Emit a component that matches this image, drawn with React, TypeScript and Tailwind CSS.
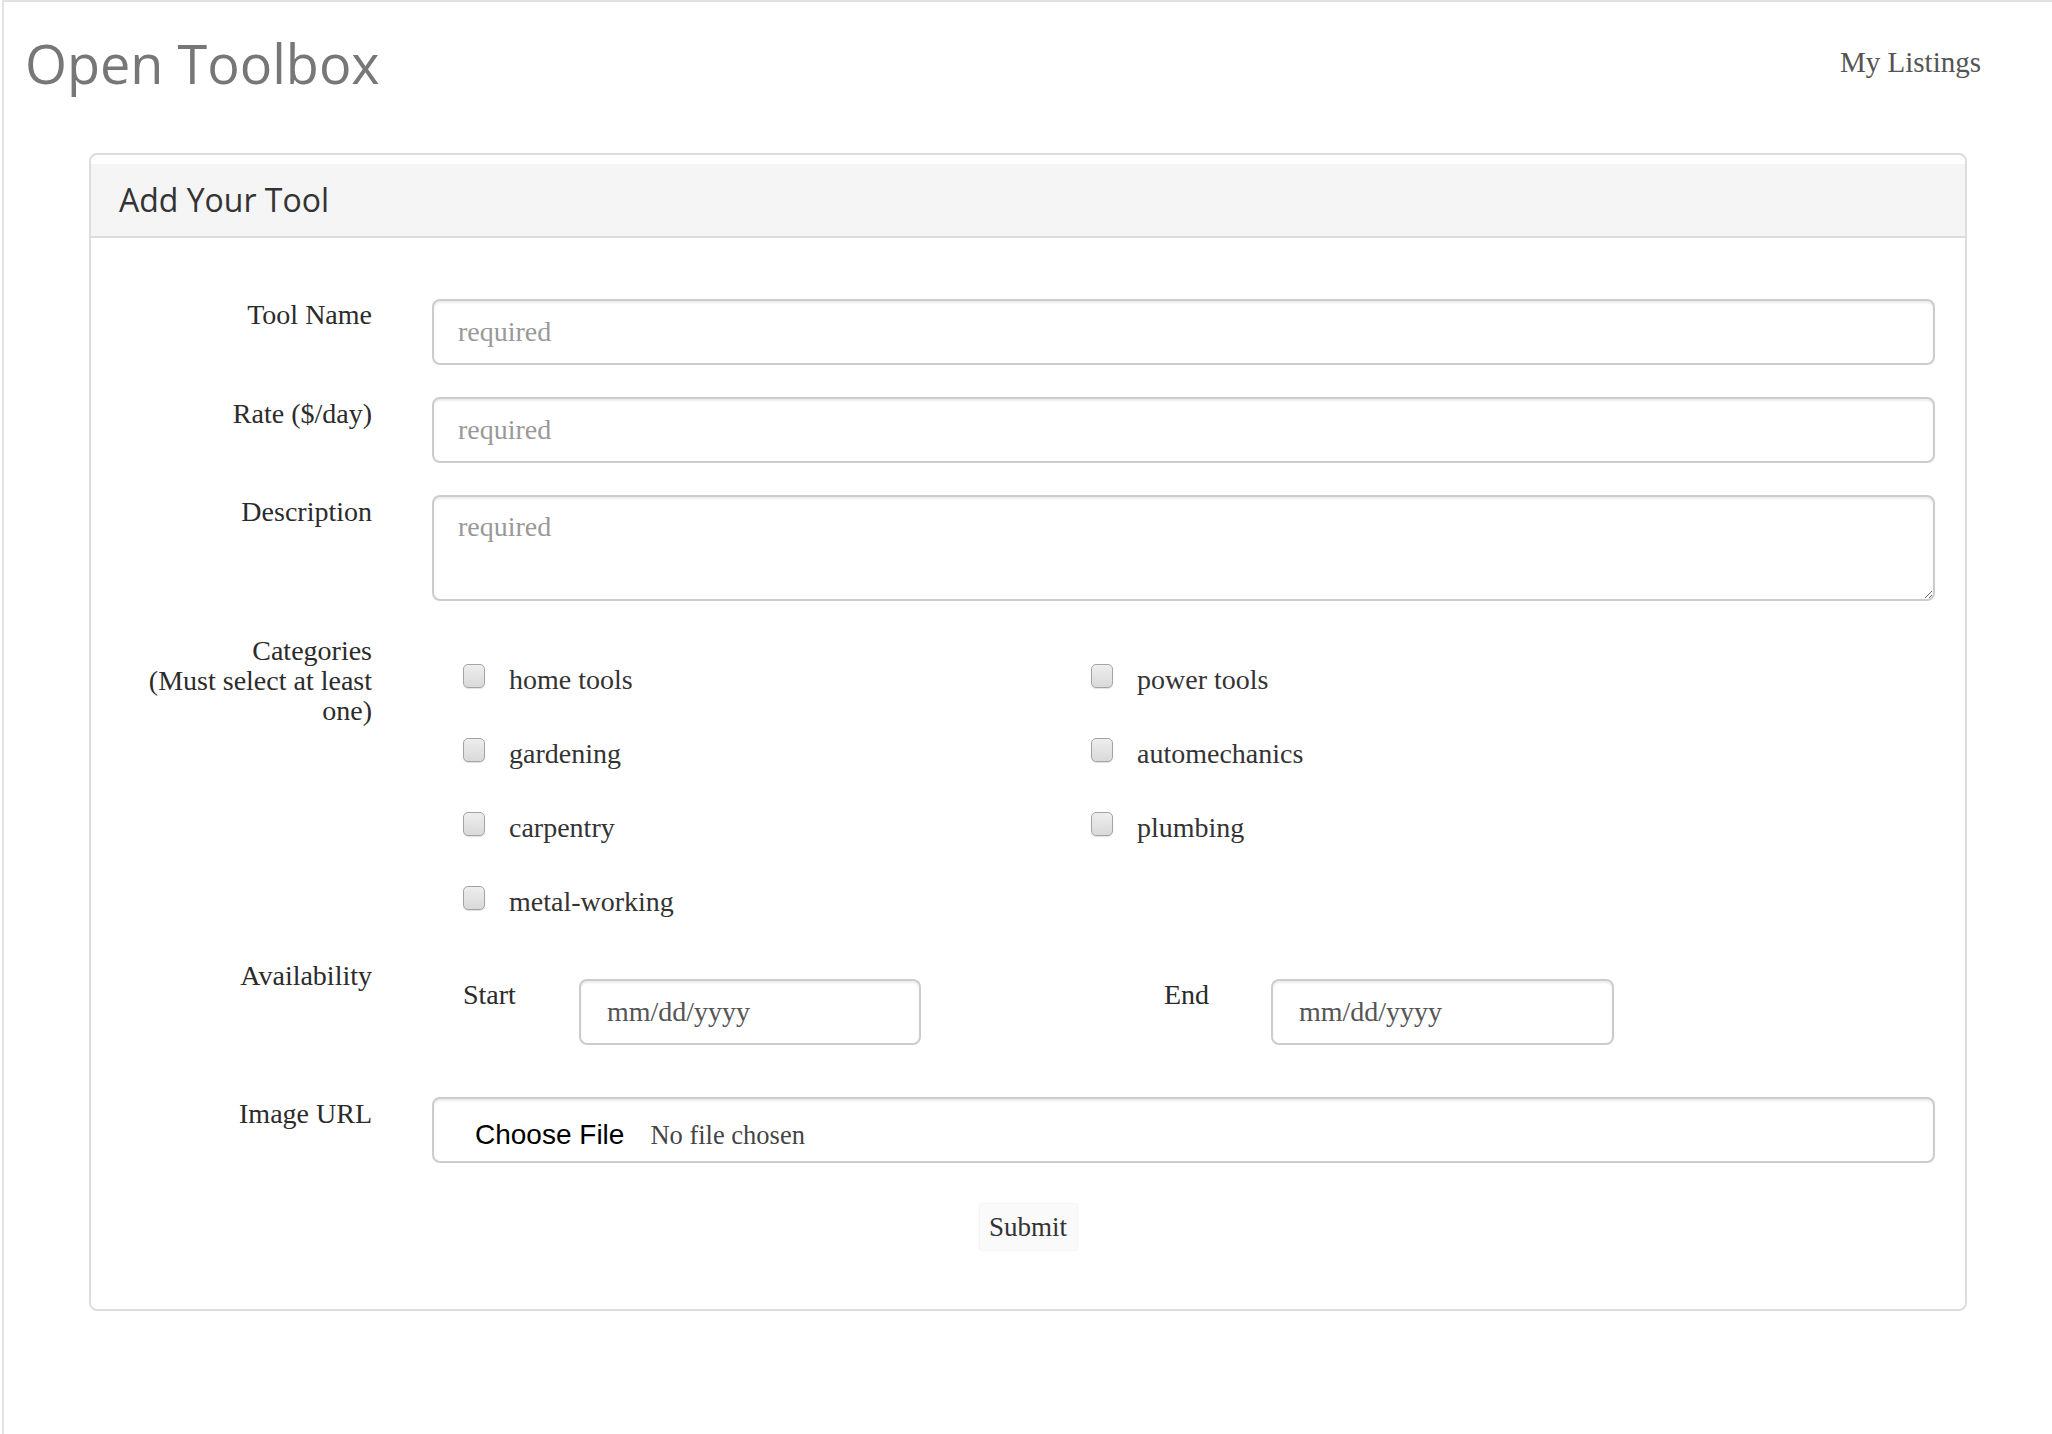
const categories = [
  ["home tools", "power tools"],
  ["gardening", "automechanics"],
  ["carpentry", "plumbing"],
  ["metal-working", ""],
];

function Checkbox({ label }: { label: string }) {
  return (
    <label className="flex items-start">
      <span className="w-[22px] h-[24px] rounded-[5px] border border-[#a3a3a3] bg-gradient-to-b from-[#eeeeee] to-[#d9d9d9] shadow-[0_1px_1px_rgba(0,0,0,0.12)]"></span>
      <span className="ml-[24px] text-[28px] leading-[32px] text-[#333]">{label}</span>
    </label>
  );
}

function FieldLabel({ children, className = "leading-[32px]" }: { children: React.ReactNode; className?: string }) {
  return (
    <div className={"w-[311px] pl-[30px] pr-[30px] text-right text-[28px] text-[#2b2b2b] " + className}>
      {children}
    </div>
  );
}

export default function App() {
  return (
    <div className="min-h-screen ml-[2px] border-t-2 border-l-2 border-[#e2e2e2] bg-white font-['Liberation_Serif',serif]">
      {/* Navbar */}
      <header className="flex justify-between items-start pt-[31px]">
        <h1 className="ml-[21px] font-['Open_Sans',sans-serif] text-[54px] leading-[60px] text-[#777]">
          Open Toolbox
        </h1>
        <a className="mt-[13px] mr-[71px] text-[29px] leading-[32px] text-[#555]">My Listings</a>
      </header>

      {/* Panel */}
      <section className="mt-[60px] ml-[85px] w-[1878px] border-2 border-[#dddddd] rounded-[8px] pt-[9px]">
        <div className="bg-[#f5f5f5] border-b-2 border-[#dddddd] px-[28px] py-[14px]">
          <h2 className="font-['Open_Sans',sans-serif] text-[32px] leading-[44px] text-[#333]">Add Your Tool</h2>
        </div>

        <form className="pt-[61px] pb-[59px]">
          <div className="flex items-start">
            <FieldLabel>Tool Name</FieldLabel>
            <input
              placeholder="required"
              className="ml-[30px] w-[1503px] h-[66px] border-2 border-[#cccccc] rounded-[8px] px-[24px] text-[28px] text-[#555] placeholder:text-[#999] shadow-[inset_0_2px_2px_rgba(0,0,0,0.075)] outline-none"
            />
          </div>

          <div className="flex items-start mt-[32px]">
            <FieldLabel className="leading-[32px] mt-[1px]">Rate ($/day)</FieldLabel>
            <input
              placeholder="required"
              className="ml-[30px] w-[1503px] h-[66px] border-2 border-[#cccccc] rounded-[8px] px-[24px] text-[28px] text-[#555] placeholder:text-[#999] shadow-[inset_0_2px_2px_rgba(0,0,0,0.075)] outline-none"
            />
          </div>

          <div className="flex items-start mt-[32px]">
            <FieldLabel className="leading-[32px] mt-[1px]">Description</FieldLabel>
            <textarea
              placeholder="required"
              className="ml-[30px] w-[1503px] h-[106px] border-2 border-[#cccccc] rounded-[8px] px-[24px] pt-[14px] text-[28px] leading-[31px] text-[#555] placeholder:text-[#999] shadow-[inset_0_2px_2px_rgba(0,0,0,0.075)] outline-none"
            />
          </div>

          <div className="flex items-start mt-[35px]">
            <FieldLabel className="leading-[30px]">
              Categories
              <br />
              (Must select at least one)
            </FieldLabel>
            <div className="ml-[61px] pt-[28px]">
              {categories.map(([a, b], i) => (
                <div key={i} className="grid grid-cols-[628px_400px] h-[74px]">
                  <Checkbox label={a} />
                  {b ? <Checkbox label={b} /> : <span></span>}
                </div>
              ))}
            </div>
          </div>

          <div className="flex items-start">
            <FieldLabel>Availability</FieldLabel>
            <div className="ml-[61px] pt-[19px] flex items-start text-[28px] leading-[32px] text-[#2b2b2b]">
              <span className="w-[116px]">Start</span>
              <input
                placeholder="mm/dd/yyyy"
                className="w-[342px] h-[66px] border-2 border-[#cccccc] rounded-[8px] px-[26px] text-[28px] text-[#555] placeholder:text-[#555] shadow-[inset_0_2px_2px_rgba(0,0,0,0.075)] outline-none"
              />
              <span className="ml-[243px] w-[107px]">End</span>
              <input
                placeholder="mm/dd/yyyy"
                className="w-[343px] h-[66px] border-2 border-[#cccccc] rounded-[8px] px-[26px] text-[28px] text-[#555] placeholder:text-[#555] shadow-[inset_0_2px_2px_rgba(0,0,0,0.075)] outline-none"
              />
            </div>
          </div>

          <div className="flex items-start mt-[52px]">
            <FieldLabel className="leading-[32px] mt-[1px]">Image URL</FieldLabel>
            <div className="ml-[30px] w-[1503px] h-[66px] border-2 border-[#cccccc] rounded-[8px] pl-[41px] pt-[20px] flex items-start shadow-[inset_0_2px_2px_rgba(0,0,0,0.075)]">
              <span className="font-['Liberation_Sans',sans-serif] text-[28px] leading-[32px] text-black">Choose File</span>
              <span className="ml-[26px] text-[26.5px] leading-[32px] text-[#444]">No file chosen</span>
            </div>
          </div>

          <div className="flex justify-center mt-[41px]">
            <button
              type="button"
              className="w-[97px] h-[46px] bg-[#fafafa] text-[27px] leading-[32px] text-[#333] shadow-[0_0_2px_rgba(0,0,0,0.12)]"
            >
              Submit
            </button>
          </div>
        </form>
      </section>
    </div>
  );
}
